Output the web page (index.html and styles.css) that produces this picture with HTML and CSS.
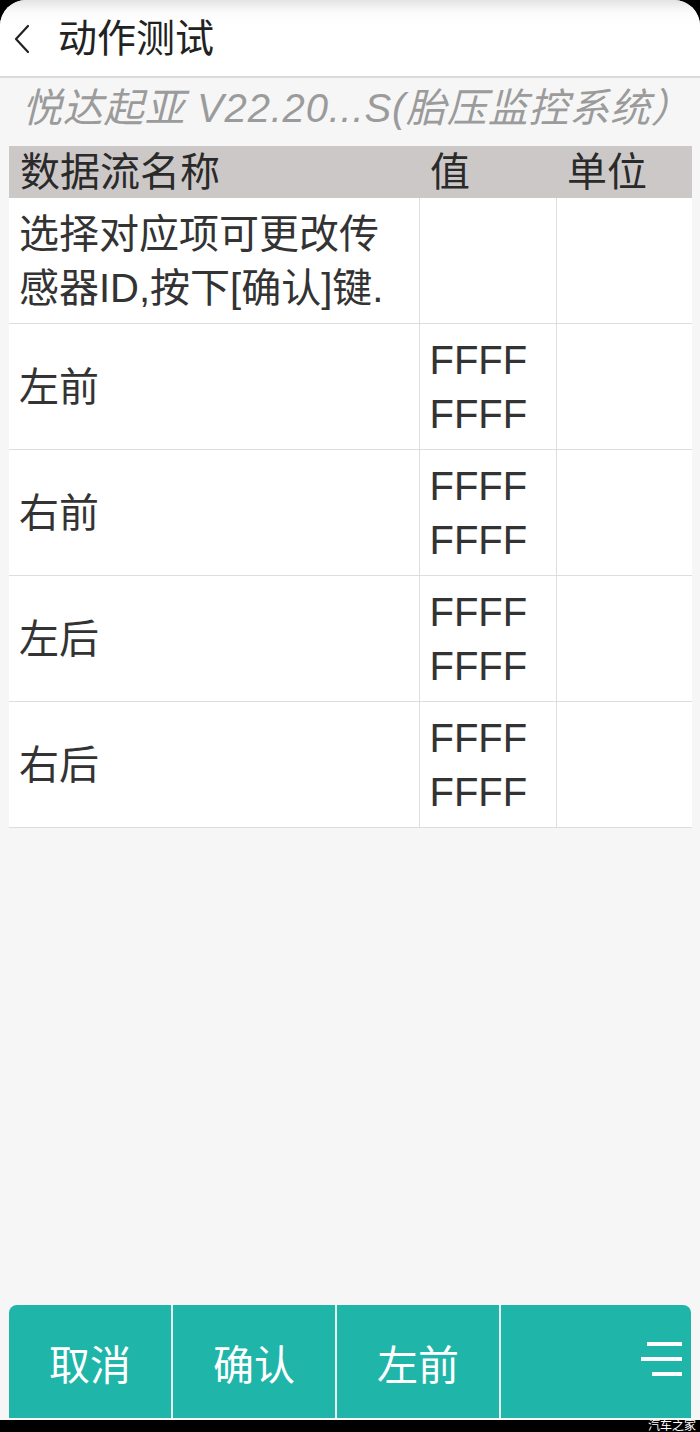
FILE: index.html
```html
<!DOCTYPE html>
<html lang="zh-CN">
<head>
    <meta charset="UTF-8">
    <meta name="viewport" content="width=device-width, initial-scale=1.0">
    <title>动作测试</title>
    <link rel="stylesheet" href="styles.css">
</head>
<body>
    <div class="screen">
        <header class="topbar">
            <svg class="back" width="20" height="32" viewBox="0 0 20 32">
                <path d="M16 3 L4 16 L16 29" fill="none" stroke="#222" stroke-width="2.2" stroke-linecap="round" stroke-linejoin="round"/>
            </svg>
            <h1>动作测试</h1>
        </header>
        <div class="subtitle">悦达起亚 V22.20...S(胎压监控系统）</div>

        <table class="data">
            <thead>
                <tr>
                    <th class="col-name">数据流名称</th>
                    <th class="col-value">值</th>
                    <th class="col-unit">单位</th>
                </tr>
            </thead>
            <tbody>
                <tr>
                    <td>选择对应项可更改传<br>感器ID,按下[确认]键.</td>
                    <td></td>
                    <td></td>
                </tr>
                <tr>
                    <td>左前</td>
                    <td>FFFF<br>FFFF</td>
                    <td></td>
                </tr>
                <tr>
                    <td>右前</td>
                    <td>FFFF<br>FFFF</td>
                    <td></td>
                </tr>
                <tr>
                    <td>左后</td>
                    <td>FFFF<br>FFFF</td>
                    <td></td>
                </tr>
                <tr>
                    <td>右后</td>
                    <td>FFFF<br>FFFF</td>
                    <td></td>
                </tr>
            </tbody>
        </table>

        <nav class="actions">
            <button class="btn">取消</button>
            <button class="btn">确认</button>
            <button class="btn">左前</button>
            <button class="btn btn-menu">
                <span class="menu-icon"><i class="top"></i><i class="mid"></i><i class="low"></i></span>
            </button>
        </nav>
    </div>
    <div class="bottom-bar"></div>
    <span class="watermark">汽车之家</span>
</body>
</html>
```

FILE: styles.css
```css
body {
    margin: 0;
    position: relative;
    background-color: #000;
    font-family: "Liberation Sans", "Noto Sans CJK SC", sans-serif;
    color: #333;
}
.screen {
    height: 1420px;
    display: flex;
    flex-direction: column;
    background-color: #f6f6f6;
    border-radius: 26px 26px 0 0;
    overflow: hidden;
}
.topbar {
    height: 76px;
    display: flex;
    align-items: center;
    padding-left: 12px;
    background: linear-gradient(#e4e4e4 0, #fbfbfb 12px, #fff 24px);
    border-bottom: 2px solid #dadada;
}
.back {
    margin-top: 2px;
}
.topbar h1 {
    margin: 0 0 0 26px;
    font-size: 39px;
    font-weight: normal;
    color: #222;
    line-height: 1;
}
.subtitle {
    height: 68px;
    line-height: 60px;
    padding-left: 22px;
    font-size: 40px;
    font-style: italic;
    color: #9b9b9b;
    white-space: nowrap;
    letter-spacing: 0.8px;
}
.data {
    margin-left: 9px;
    width: 683px;
    border-collapse: collapse;
    table-layout: fixed;
    font-size: 40px;
}
.data th {
    height: 52px;
    padding: 0 0 0 11px;
    background-color: #cdc8c8;
    font-weight: normal;
    text-align: left;
    line-height: 52px;
    color: #2a2a2a;
}
.col-name {
    width: 399px;
}
.col-value {
    width: 126px;
}
.data td {
    height: 125px;
    padding: 0 0 0 10px;
    background-color: #fff;
    border-right: 1px solid #dedede;
    border-bottom: 1px solid #dedede;
    line-height: 54px;
    vertical-align: middle;
    color: #333;
}
.data td:last-child {
    border-right: none;
}
.actions {
    margin: auto 9px 2px 9px;
    height: 113px;
    display: flex;
    background-color: #1fb5a9;
    border-radius: 8px 8px 0 0;
    overflow: hidden;
}
.btn {
    flex: 0 0 164px;
    border: none;
    border-right: 2px solid #e6f6f4;
    background: none;
    color: #fff;
    font-family: "Noto Sans CJK SC", sans-serif;
    font-size: 41px;
    padding: 0;
    cursor: pointer;
}
.btn-menu {
    flex: 1;
    border-right: none;
    display: flex;
    justify-content: flex-end;
    align-items: center;
    padding-right: 9px;
}
.menu-icon {
    display: flex;
    flex-direction: column;
    align-items: flex-end;
    gap: 11px;
    margin-bottom: 6px;
}
.menu-icon i {
    display: block;
    height: 4px;
    background-color: #fff;
}
.menu-icon .top {
    width: 35px;
}
.menu-icon .mid {
    width: 41px;
}
.menu-icon .low {
    width: 30px;
}
.bottom-bar {
    height: 12px;
}
.watermark {
    position: absolute;
    right: 4px;
    bottom: 1px;
    font-family: "Noto Sans CJK SC", sans-serif;
    font-size: 12px;
    color: #fff;
    line-height: 1;
}
```
